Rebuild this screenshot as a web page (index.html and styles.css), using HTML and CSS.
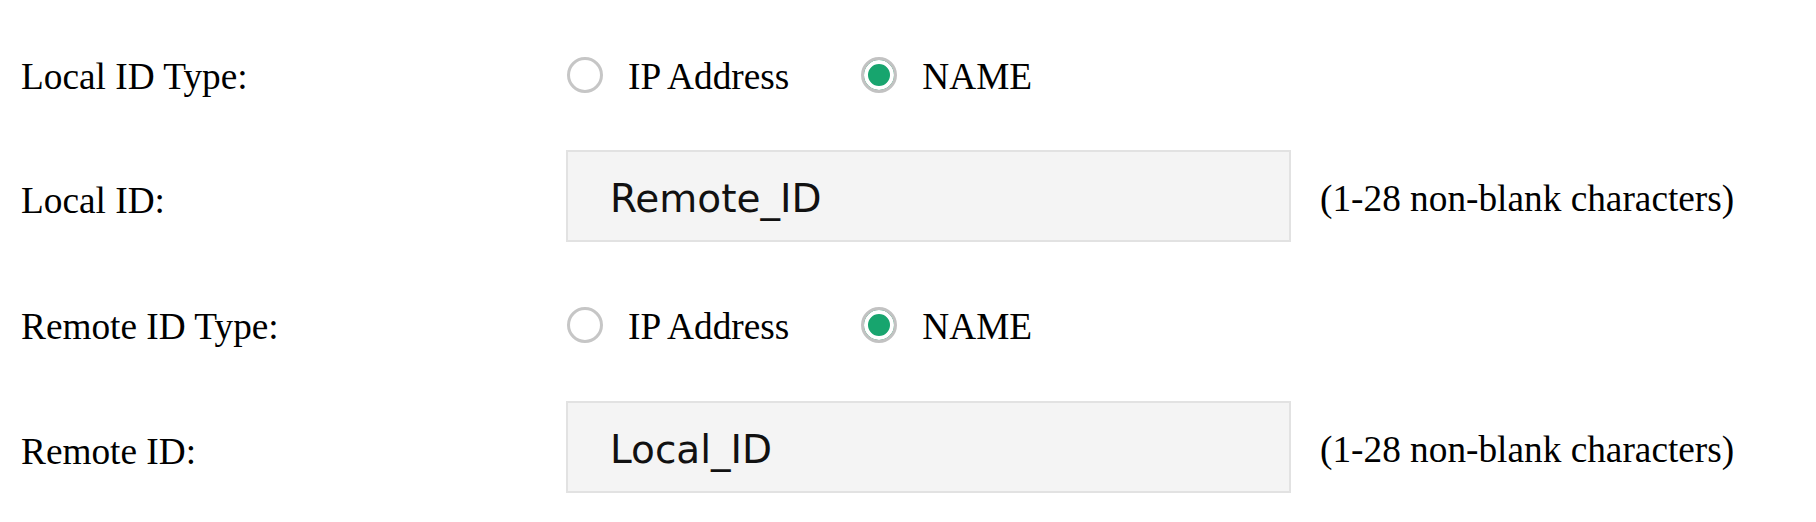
FILE: index.html
```html
<!DOCTYPE html>
<html lang="en">
<head>
    <meta charset="UTF-8">
    <meta name="viewport" content="width=device-width, initial-scale=1.0">
    <title>IPSec ID Settings</title>
    <link rel="stylesheet" href="styles.css">
</head>
<body>
    <form class="id-form">
        <div class="row radio-row">
            <div class="label">Local ID Type:</div>
            <div class="control">
                <label class="option"><input type="radio" class="radio" name="local-type" value="ip"> IP Address</label>
                <label class="option"><input type="radio" class="radio" name="local-type" value="name" checked> NAME</label>
            </div>
        </div>

        <div class="row input-row">
            <div class="label">Local ID:</div>
            <div class="control">
                <input type="text" class="text-field" value="Remote_ID">
                <span class="hint">(1-28 non-blank characters)</span>
            </div>
        </div>

        <div class="row radio-row">
            <div class="label">Remote ID Type:</div>
            <div class="control">
                <label class="option"><input type="radio" class="radio" name="remote-type" value="ip"> IP Address</label>
                <label class="option"><input type="radio" class="radio" name="remote-type" value="name" checked> NAME</label>
            </div>
        </div>

        <div class="row input-row">
            <div class="label">Remote ID:</div>
            <div class="control">
                <input type="text" class="text-field" value="Local_ID">
                <span class="hint">(1-28 non-blank characters)</span>
            </div>
        </div>
    </form>
</body>
</html>
```

FILE: styles.css
```css
* {
    margin: 0;
    padding: 0;
    box-sizing: border-box;
}

body {
    font-family: "Liberation Serif", "Times New Roman", serif;
    font-size: 37.3px;
    color: #000;
    background: #fff;
    padding: 36px 0 0 21px;
}

.id-form {
    display: flex;
    flex-direction: column;
}

.row {
    display: flex;
    align-items: center;
}

.radio-row {
    height: 80px;
    margin-bottom: 34px;
}

.input-row {
    height: 92px;
    margin-bottom: 44px;
}

.row:nth-child(3) {
    margin-bottom: 35px;
}

.label {
    width: 545px;
    flex-shrink: 0;
}

.input-row .label {
    padding-top: 8px;
}

.control {
    display: flex;
    align-items: center;
}

.option {
    display: flex;
    align-items: center;
    gap: 25px;
    margin-right: 72px;
    margin-left: 1px;
}

.option + .option {
    margin-left: 0;
}

.radio {
    appearance: none;
    -webkit-appearance: none;
    width: 36px;
    height: 36px;
    border-radius: 50%;
    border: 3px solid #c6c6c6;
    background: #fff;
    margin: 0;
    margin-top: -3px;
    flex-shrink: 0;
}

.radio:checked {
    background: #17a56e;
    box-shadow: inset 0 0 0 4px #fff;
    border-color: #c2c2c2;
}

.text-field {
    width: 725px;
    height: 92px;
    border: 2px solid #e2e2e2;
    background: #f4f4f4;
    font-family: "DejaVu Sans", Verdana, sans-serif;
    font-size: 39px;
    color: #111;
    padding: 4px 0 0 42px;
    outline: none;
}

.hint {
    margin-left: 29px;
    padding-top: 4px;
}
```
